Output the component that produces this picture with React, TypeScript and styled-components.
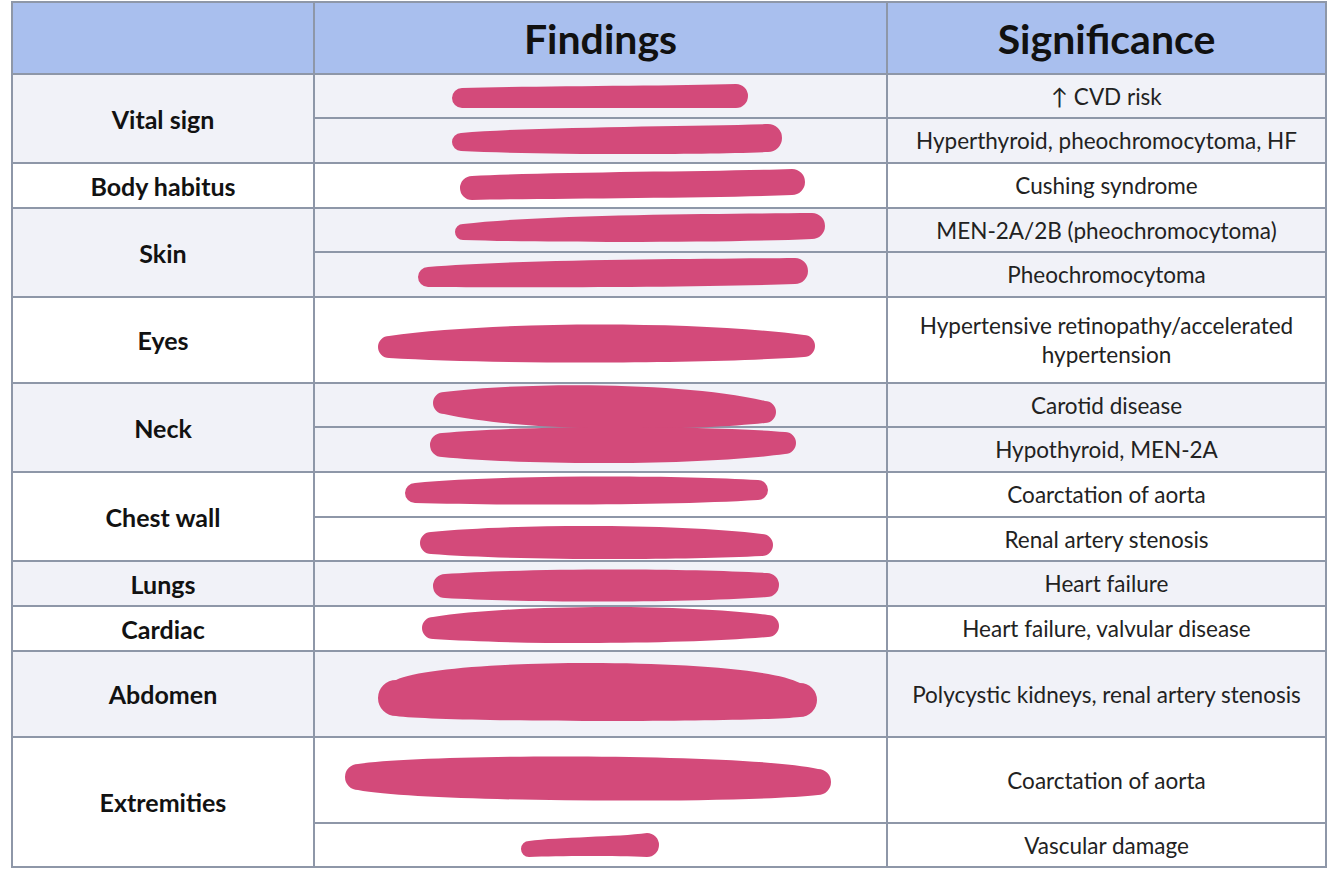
import React from 'react';
import styled, { createGlobalStyle } from 'styled-components';

// ─── Types ────────────────────────────────────────────────────────────────────

interface SubRow {
  h: number;
  sig: React.ReactNode;
}

interface Group {
  label: string;
  tint: boolean;
  rows: SubRow[];
}

interface Mark {
  x1: number;
  x2: number;
  y1: number;
  y2: number;
  r1: number;
  r2: number;
  top: number;
  bot: number;
  k?: number;
}

// ─── Data ─────────────────────────────────────────────────────────────────────

const GROUPS: Group[] = [
  { label: 'Vital sign', tint: true, rows: [{ h: 44, sig: '↑ CVD risk' }, { h: 45, sig: 'Hyperthyroid, pheochromocytoma, HF' }] },
  { label: 'Body habitus', tint: false, rows: [{ h: 45, sig: 'Cushing syndrome' }] },
  { label: 'Skin', tint: true, rows: [{ h: 44, sig: 'MEN-2A/2B (pheochromocytoma)' }, { h: 45, sig: 'Pheochromocytoma' }] },
  { label: 'Eyes', tint: false, rows: [{ h: 86, sig: <>Hypertensive retinopathy/accelerated<br />hypertension</> }] },
  { label: 'Neck', tint: true, rows: [{ h: 44, sig: 'Carotid disease' }, { h: 45, sig: 'Hypothyroid, MEN-2A' }] },
  { label: 'Chest wall', tint: false, rows: [{ h: 45, sig: 'Coarctation of aorta' }, { h: 44, sig: 'Renal artery stenosis' }] },
  { label: 'Lungs', tint: true, rows: [{ h: 45, sig: 'Heart failure' }] },
  { label: 'Cardiac', tint: false, rows: [{ h: 45, sig: 'Heart failure, valvular disease' }] },
  { label: 'Abdomen', tint: true, rows: [{ h: 86, sig: 'Polycystic kidneys, renal artery stenosis' }] },
  { label: 'Extremities', tint: false, rows: [{ h: 86, sig: 'Coarctation of aorta' }, { h: 44, sig: 'Vascular damage' }] },
];

// redaction strokes over the findings column, in page coords
const MARKS: Mark[] = [
  { x1: 452, x2: 748, y1: 98, y2: 96, r1: 10, r2: 12, top: 11, bot: 11 },
  { x1: 452, x2: 782, y1: 142, y2: 138, r1: 9, r2: 14, top: 13, bot: 14 },
  { x1: 460, x2: 805, y1: 188, y2: 182, r1: 12, r2: 13, top: 13, bot: 13 },
  { x1: 455, x2: 825, y1: 232, y2: 226, r1: 8, r2: 13, top: 14, bot: 13 },
  { x1: 418, x2: 808, y1: 277, y2: 271, r1: 10, r2: 13, top: 14, bot: 13 },
  { x1: 378, x2: 815, y1: 347, y2: 346, r1: 11, r2: 11, top: 22, bot: 16 },
  { x1: 433, x2: 776, y1: 403, y2: 412, r1: 11, r2: 11, top: 22, bot: 21 },
  { x1: 430, x2: 796, y1: 445, y2: 443, r1: 12, r2: 11, top: 17, bot: 19 },
  { x1: 405, x2: 768, y1: 493, y2: 490, r1: 10, r2: 10, top: 15, bot: 13 },
  { x1: 420, x2: 773, y1: 543, y2: 545, r1: 11, r2: 11, top: 18, bot: 15 },
  { x1: 433, x2: 779, y1: 586, y2: 585, r1: 12, r2: 12, top: 16, bot: 16 },
  { x1: 422, x2: 779, y1: 628, y2: 626, r1: 11, r2: 11, top: 20, bot: 16 },
  { x1: 378, x2: 817, y1: 698, y2: 700, r1: 18, r2: 17, top: 36, bot: 22, k: 0.12 },
  { x1: 345, x2: 831, y1: 777, y2: 782, r1: 13, r2: 13, top: 23, bot: 21, k: 0.15 },
  { x1: 521, x2: 659, y1: 849, y2: 845, r1: 8, r2: 12, top: 10, bot: 9 },
];

const markPath = ({ x1, x2, y1, y2, r1, r2, top, bot, k = 0.25 }: Mark) => {
  const a = x1 + r1;
  const b = x2 - r2;
  const w = b - a;
  const cy = (y1 + y2) / 2;
  const rm = (r1 + r2) / 2;
  const ht = (4 * top - rm) / 3;
  const hb = (4 * bot - rm) / 3;
  return [
    `M${a},${y1 - r1}`,
    `C${a + w * k},${cy - ht} ${b - w * k},${cy - ht} ${b},${y2 - r2}`,
    `A${r2},${r2} 0 0 1 ${b},${y2 + r2}`,
    `C${b - w * k},${cy + hb} ${a + w * k},${cy + hb} ${a},${y1 + r1}`,
    `A${r1},${r1} 0 0 1 ${a},${y1 - r1}Z`,
  ].join(' ');
};

// ─── Styled ───────────────────────────────────────────────────────────────────

const GlobalStyle = createGlobalStyle`
  html, body {
    margin: 0;
    padding: 0;
    background: #ffffff;
  }
  body {
    font-family: Lato, "Open Sans", "Liberation Sans", sans-serif;
    color: #1c1c1c;
  }
`;

const Page = styled.div`
  position: relative;
  width: 1334px;
  height: 870px;
  padding: 1px 0 0 11px;
  box-sizing: border-box;
  overflow: hidden;
`;

const Table = styled.table`
  border-collapse: collapse;
  table-layout: fixed;
  width: 1314px;
`;

const Col = styled.col<{ w: number }>`
  width: ${({ w }) => w}px;
`;

const HeadCell = styled.th`
  height: 72px;
  padding: 0;
  background: #a9bfee;
  border: 2px solid #8e97a8;
  font-size: 41px;
  font-weight: 700;
  color: #111;
  text-align: center;
  vertical-align: middle;
  box-sizing: border-box;
`;

const Row = styled.tr<{ tint: boolean }>`
  background: ${({ tint }) => (tint ? '#f1f2f8' : '#ffffff')};
`;

const Cell = styled.td<{ h: number }>`
  height: ${({ h }) => h}px;
  padding: 0 4px;
  border: 2px solid #8e97a8;
  box-sizing: border-box;
  text-align: center;
  vertical-align: middle;
`;

const Label = styled(Cell)`
  font-size: 25px;
  font-weight: 700;
  color: #121212;
`;

const Sig = styled(Cell)`
  font-size: 22.5px;
  line-height: 29px;
  color: #222;
  white-space: nowrap;
`;

const Overlay = styled.svg`
  position: absolute;
  left: 0;
  top: 0;
  pointer-events: none;
`;

// ─── Component ────────────────────────────────────────────────────────────────

const App: React.FC = () => (
  <>
    <GlobalStyle />
    <Page>
      <Table>
        <colgroup>
          <Col w={302} />
          <Col w={573} />
          <Col w={439} />
        </colgroup>
        <thead>
          <tr>
            <HeadCell />
            <HeadCell>Findings</HeadCell>
            <HeadCell>Significance</HeadCell>
          </tr>
        </thead>
        <tbody>
          {GROUPS.map((g) =>
            g.rows.map((r, i) => (
              <Row key={`${g.label}-${i}`} tint={g.tint}>
                {i === 0 && (
                  <Label h={g.rows.reduce((s, x) => s + x.h, 0)} rowSpan={g.rows.length}>
                    {g.label}
                  </Label>
                )}
                <Cell h={r.h} />
                <Sig h={r.h}>{r.sig}</Sig>
              </Row>
            )),
          )}
        </tbody>
      </Table>
      <Overlay width={1334} height={870} viewBox="0 0 1334 870">
        {MARKS.map((m, i) => (
          <path key={i} d={markPath(m)} fill="#d34a7a" />
        ))}
      </Overlay>
    </Page>
  </>
);

export default App;
